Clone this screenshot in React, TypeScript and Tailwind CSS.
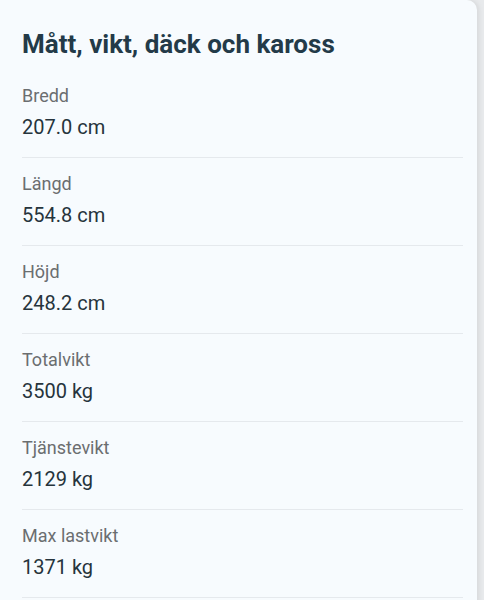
import React from "react";

const rows = [
  { label: "Bredd", value: "207.0 cm" },
  { label: "Längd", value: "554.8 cm" },
  { label: "Höjd", value: "248.2 cm" },
  { label: "Totalvikt", value: "3500 kg" },
  { label: "Tjänstevikt", value: "2129 kg" },
  { label: "Max lastvikt", value: "1371 kg" },
];

export default function App() {
  return (
    <div
      className="w-[484px] h-[600px] overflow-hidden bg-[#e8eaec]"
      style={{ fontFamily: "Roboto, 'Noto Sans', sans-serif" }}
    >
      <div className="w-[477px] min-h-[640px] bg-[#f7fbfe] rounded-tr-[10px] shadow-[2px_0_5px_rgba(0,0,0,0.08)] pl-[22px] pr-[14px] pt-[29px]">
        <h1 className="text-[26px] leading-[30px] font-bold text-[#233a48]">
          Mått, vikt, däck och kaross
        </h1>
        <div className="mt-[11px]">
          {rows.map((r) => (
            <div key={r.label} className="pt-[14px] pb-[16px] border-b border-[#e5e9ed]">
              <div className="text-[18px] leading-[24px] text-[#6b6e70]">{r.label}</div>
              <div className="mt-[5px] text-[20px] leading-[28px] text-[#26343c]">{r.value}</div>
            </div>
          ))}
        </div>
      </div>
    </div>
  );
}
